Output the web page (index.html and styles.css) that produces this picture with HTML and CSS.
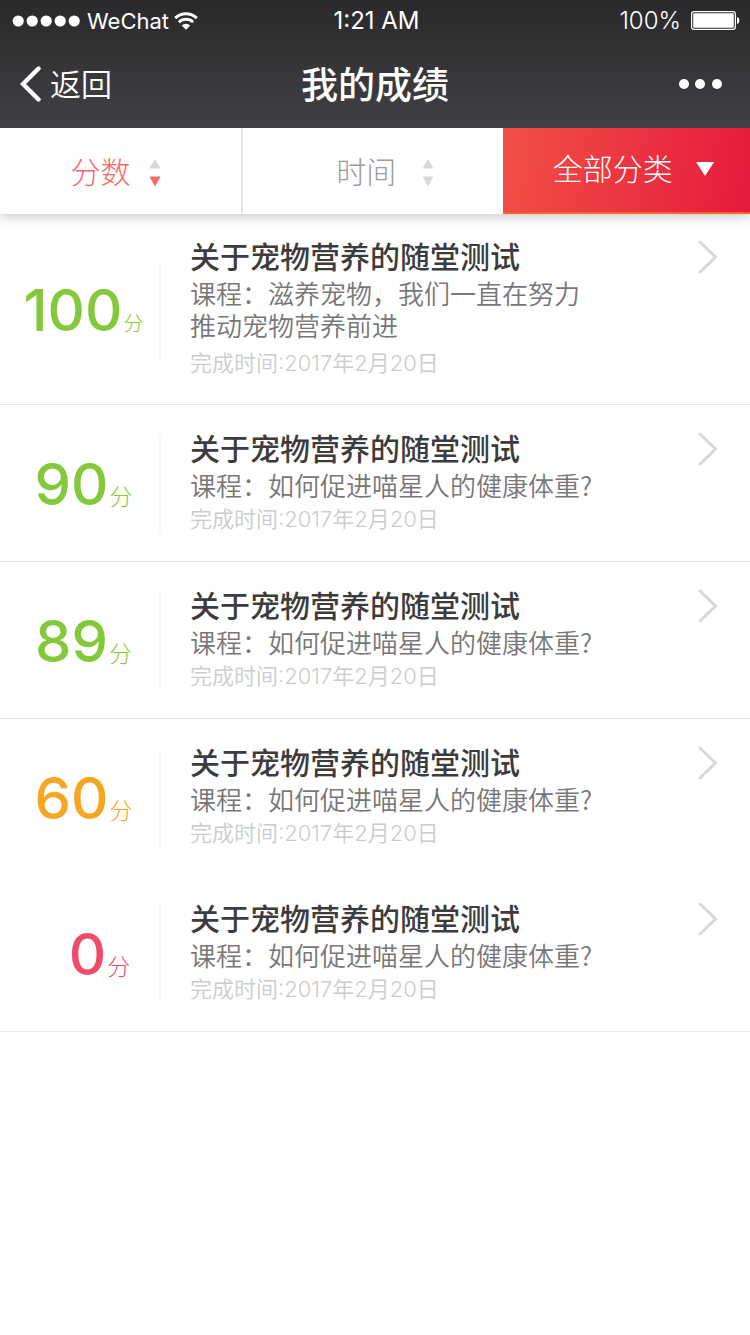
FILE: index.html
```html
<!DOCTYPE html>
<html lang="zh-CN">
<head>
<meta charset="utf-8">
<meta name="viewport" content="width=device-width">
<title>我的成绩</title>
<link rel="stylesheet" href="styles.css">
</head>
<body>
<header class="top">
  <div class="status">
    <div class="status-side">
      <svg class="signal" width="68" height="12" viewBox="0 0 68 12" fill="#fff"><circle cx="6.2" cy="6" r="5.6"/><circle cx="20.2" cy="6" r="5.6"/><circle cx="34.2" cy="6" r="5.6"/><circle cx="48.2" cy="6" r="5.6"/><circle cx="62.200" cy="6" r="5.6"/></svg>
      <span class="carrier">WeChat</span>
      <svg class="wifi" width="24" height="18" viewBox="0 0 24 18" fill="none" stroke="#fff" stroke-width="2.9"><path d="M1.2 6.1a15.4 15.4 0 0 1 21.6 0"/><path d="M4.9 10.2a10.2 10.2 0 0 1 14.2 0"/><path d="M12 17.8L7.8 13.5a6 6 0 0 1 8.4 0z" fill="#fff" stroke="none"/></svg>
    </div>
    <span class="clock">1:21 AM</span>
    <div class="status-side status-right">
      <span class="percent">100%</span>
      <svg width="50" height="20" viewBox="0 0 50 20"><rect x=".6" y=".6" width="43.8" height="17.8" rx="2.4" fill="none" stroke="#fff" stroke-width="1.2"/><rect x="2.2" y="2.2" width="40.6" height="14.6" rx="1" fill="#fff"/><path d="M46 6c3.2.8 3.2 6.200 0 7z" fill="#fff"/></svg>
    </div>
  </div>
  <nav class="nav">
    <a class="back" href="#"><svg width="21" height="36" viewBox="0 0 21 36" fill="none" stroke="#fff" stroke-width="4.400" stroke-linecap="round" stroke-linejoin="miter"><path d="M18.500 2.500L3 18l15.500 15.500"/></svg><span class="back-label">返回</span></a>
    <h1 class="page-title">我的成绩</h1>
    <button class="more" type="button" aria-label="更多"><svg width="44" height="10" viewBox="0 0 44 10" fill="#fff"><circle cx="5" cy="5" r="5"/><circle cx="21" cy="5" r="5"/><circle cx="38" cy="5" r="5"/></svg></button>
  </nav>
</header>
<div class="tabs">
  <button class="tab tab-score" type="button">分数<svg width="12" height="28" viewBox="0 0 12 28"><path d="M6 0l5.500 9.500h-11z" fill="#d8d8d8"/><path d="M6 27.500L.5 17.500h11z" fill="#ff6767"/></svg></button>
  <button class="tab tab-time" type="button">时间<svg width="12" height="28" viewBox="0 0 12 28" fill="#d8d8d8"><path d="M6 0l5.500 9.500h-11z"/><path d="M6 27.500L.5 17.500h11z"/></svg></button>
  <button class="tab tab-category" type="button">全部分类<svg width="18" height="14" viewBox="0 0 18 14"><path d="M0 0h18L9 14z" fill="#fff"/></svg></button>
</div>
<main class="list">
  <a class="item item-long" href="#">
    <div class="score good"><span class="num">100</span><span class="unit">分</span></div>
    <div class="info"><h2 class="title">关于宠物营养的随堂测试</h2><p class="course">课程：滋养宠物，我们一直在努力<br>推动宠物营养前进</p><p class="date">完成时间:2017年2月20日</p></div>
    <svg class="chevron" width="20" height="34" viewBox="0 0 20 34"><path d="M2 2l15.500 15L2 32"/></svg>
  </a>
  <a class="item" href="#">
    <div class="score good"><span class="num">90</span><span class="unit">分</span></div>
    <div class="info"><h2 class="title">关于宠物营养的随堂测试</h2><p class="course">课程：如何促进喵星人的健康体重?</p><p class="date">完成时间:2017年2月20日</p></div>
    <svg class="chevron" width="20" height="34" viewBox="0 0 20 34"><path d="M2 2l15.500 15L2 32"/></svg>
  </a>
  <a class="item" href="#">
    <div class="score good"><span class="num">89</span><span class="unit">分</span></div>
    <div class="info"><h2 class="title">关于宠物营养的随堂测试</h2><p class="course">课程：如何促进喵星人的健康体重?</p><p class="date">完成时间:2017年2月20日</p></div>
    <svg class="chevron" width="20" height="34" viewBox="0 0 20 34"><path d="M2 2l15.500 15L2 32"/></svg>
  </a>
  <a class="item item-open" href="#">
    <div class="score fair"><span class="num">60</span><span class="unit">分</span></div>
    <div class="info"><h2 class="title">关于宠物营养的随堂测试</h2><p class="course">课程：如何促进喵星人的健康体重?</p><p class="date">完成时间:2017年2月20日</p></div>
    <svg class="chevron" width="20" height="34" viewBox="0 0 20 34"><path d="M2 2l15.500 15L2 32"/></svg>
  </a>
  <a class="item" href="#">
    <div class="score poor"><span class="num">0</span><span class="unit">分</span></div>
    <div class="info"><h2 class="title">关于宠物营养的随堂测试</h2><p class="course">课程：如何促进喵星人的健康体重?</p><p class="date">完成时间:2017年2月20日</p></div>
    <svg class="chevron" width="20" height="34" viewBox="0 0 20 34"><path d="M2 2l15.500 15L2 32"/></svg>
  </a>
</main>
</body>
</html>
```
FILE: styles.css
```css
* { box-sizing: border-box; }
body {
  margin: 0;
  background: #fff;
  font-family: "Noto Sans CJK SC", sans-serif;
}
h1, h2, p { margin: 0; }
a { color: inherit; text-decoration: none; }
button { margin: 0; padding: 0; border: 0; background: none; font: inherit; cursor: pointer; }
svg { display: block; flex: none; }

.top { color: #fff; background: linear-gradient(#29292b, #414145); }
.status {
  display: flex;
  align-items: center;
  height: 40px;
  padding: 2px 9px 0 12px;
  font: 22px/38px Inter, "Liberation Sans", sans-serif;
}
.status-side { display: flex; flex: 1; align-items: center; gap: 7px; }
.status-right { justify-content: flex-end; gap: 10px; }
.clock { font-size: 24px; font-weight: 400; }
.wifi { margin-left: -2px; }
.percent { font-weight: 300; font-size: 24px; }
.nav {
  display: flex;
  align-items: center;
  height: 88px;
  padding: 0 20px;
}
.back {
  display: flex;
  flex: 1;
  align-items: center;
  gap: 9px;
  font-size: 31px;
  font-weight: 350;
}
.back-label { padding-bottom: 4px; }
.page-title { padding-bottom: 3px; font-size: 37px; font-weight: 500; line-height: 56px; }
.more { display: flex; flex: 1; justify-content: flex-end; }
.more svg { margin-right: 7px; }

.tabs {
  position: relative;
  display: flex;
  height: 86px;
  background: #fff;
  box-shadow: 0 2px 12px rgba(0, 0, 0, .24);
  clip-path: inset(0 0 -20px 0);
}
.tab {
  display: flex;
  align-items: center;
  justify-content: center;
  gap: 18px;
  padding-bottom: 3px;
  font-size: 30px;
  font-weight: 300;
  line-height: 44px;
}
.tab svg { margin-top: 6px; }
.tab-score { width: 32.4%; padding-right: 10px; color: #ff6767; border-right: 2px solid #e6e6e6; }
.tab-time { flex: 1; gap: 26px; padding-left: 25px; color: #9b9b9b; }
.tab-category {
  width: 33%;
  gap: 23px;
  padding: 0 0 6px 14px;
  color: #fff;
  background: linear-gradient(98deg, #f15046, #e61a3c);
  border-bottom: 2px solid #ff6420;
}
.tab-category svg { margin-top: 3px; }

.item {
  display: flex;
  align-items: stretch;
  padding: 23px 32px 25px 0;
  border-bottom: 1px solid #e5e5e5;
}
.item-long { padding-top: 22px; padding-bottom: 24px; }
.item-long .date { margin-top: 4px; }
.item-open { border-bottom: 0; }
.score {
  display: flex;
  flex: none;
  align-items: baseline;
  align-self: center;
  justify-content: center;
  width: 161px;
  height: 98px;
  padding-left: 8px;
  gap: 1px;
  border-right: 2px solid #f5f5f5;
  line-height: 98px;
  margin: -18px 0 -22px;
}
.num { font-family: Inter, "Liberation Sans", sans-serif; font-size: 58px; font-weight: 500; }
.unit { font-size: 23px; font-weight: 300; }
.item-long .unit { font-size: 20px; }
.good { color: #84c83c; }
.fair { color: #f6a623; }
.poor { padding-left: 40px; color: #ef4b6a; }
.info { flex: 1; padding-left: 29px; }
.title { margin-bottom: 3px; color: #3c3c3c; font-size: 30px; font-weight: 500; line-height: 38px; }
.course { padding-bottom: 1px; color: #777; font-size: 26px; font-weight: 350; line-height: 32px; }
.date {
  color: #ccc;
  font-family: Inter, "Noto Sans CJK SC", sans-serif;
  font-size: 22px;
  font-weight: 350;
  line-height: 34px;
}
.chevron { margin-top: 4px; fill: none; stroke: #d8d8d8; stroke-width: 3; stroke-linecap: round; }
```
